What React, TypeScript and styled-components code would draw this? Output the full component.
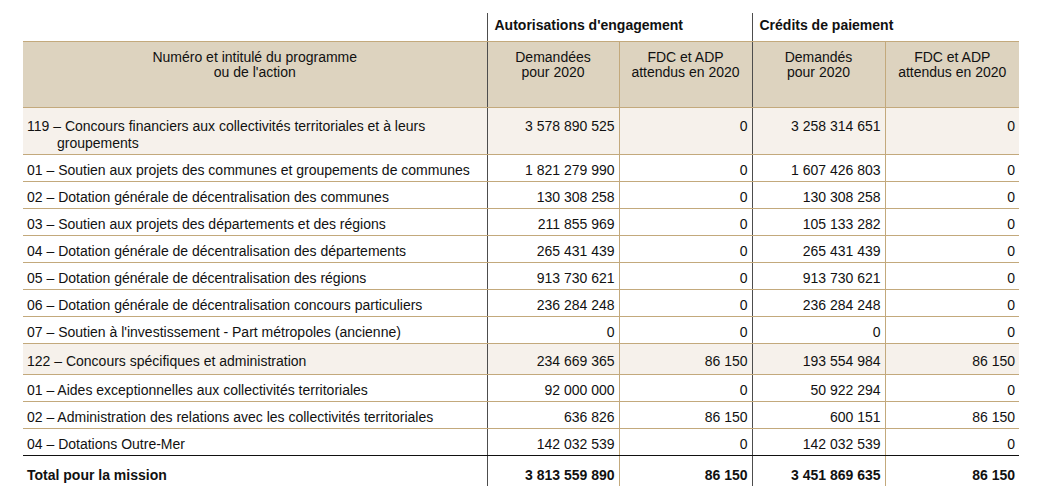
import React from "react";
import styled, { createGlobalStyle } from "styled-components";

const Global = createGlobalStyle`
  html, body { margin: 0; padding: 0; background: #ffffff; }
  body { font-family: "Liberation Sans", Arial, sans-serif; color: #111; }
`;

const TAN = "#c3a97c";
const DARK = "#4d4d4d";

const Page = styled.div`
  padding: 13px 0 0 23px;
`;

const Table = styled.table`
  border-collapse: collapse;
  table-layout: fixed;
  width: 996px;
  font-size: 14px;
  line-height: 17px;
`;

const GroupCell = styled.th`
  text-align: left;
  font-weight: bold;
  padding: 4px 0 0 7px;
  height: 24px;
  vertical-align: top;
  border-left: 1px solid ${DARK};
  border-bottom: 1px solid ${TAN};
`;

const EmptyCell = styled.th`
  border-bottom: 1px solid ${TAN};
`;

const HeadCell = styled.th<{ $sep?: "dark" | "tan" }>`
  background: #ddd3bf;
  font-weight: normal;
  text-align: center;
  vertical-align: top;
  padding: 8px 4px 0;
  height: 57px;
  line-height: 15px;
  border-bottom: 1px solid ${TAN};
  border-left: ${(p) =>
    p.$sep === "dark" ? `1px solid ${DARK}` : p.$sep === "tan" ? `1px solid ${TAN}` : "none"};
`;

const Row = styled.tr<{ $kind: "program" | "action" | "total"; $last?: boolean }>`
  background: ${(p) => (p.$kind === "program" ? "#f6f1eb" : "#ffffff")};
  & > td {
    border-bottom: 1px solid ${(p) => (p.$last ? "#111" : p.$kind === "total" ? "transparent" : TAN)};
    font-weight: ${(p) => (p.$kind === "total" ? "bold" : "normal")};
  }
`;

const LabelCell = styled.td<{ $pt: number; $h: number }>`
  text-align: left;
  vertical-align: top;
  padding: ${(p) => p.$pt}px 4px 0 34px;
  text-indent: -30px;
  height: ${(p) => p.$h - p.$pt - 1}px;
`;

const NumCell = styled.td<{ $pt: number; $sep: "dark" | "tan" }>`
  text-align: right;
  vertical-align: top;
  padding: ${(p) => p.$pt}px 4px 0 4px;
  border-left: 1px solid ${(p) => (p.$sep === "dark" ? DARK : TAN)};
`;

type R = {
  label: string;
  v: [string, string, string, string];
  kind: "program" | "action" | "total";
  h: number;
  pt: number;
  last?: boolean;
};

const rows: R[] = [
  {
    label: "119 – Concours financiers aux collectivités territoriales et à leurs groupements",
    v: ["3 578 890 525", "0", "3 258 314 651", "0"],
    kind: "program",
    h: 47,
    pt: 10,
  },
  { label: "01 – Soutien aux projets des communes et groupements de communes", v: ["1 821 279 990", "0", "1 607 426 803", "0"], kind: "action", h: 27, pt: 7 },
  { label: "02 – Dotation générale de décentralisation des communes", v: ["130 308 258", "0", "130 308 258", "0"], kind: "action", h: 27, pt: 7 },
  { label: "03 – Soutien aux projets des départements et des régions", v: ["211 855 969", "0", "105 133 282", "0"], kind: "action", h: 27, pt: 7 },
  { label: "04 – Dotation générale de décentralisation des départements", v: ["265 431 439", "0", "265 431 439", "0"], kind: "action", h: 27, pt: 7 },
  { label: "05 – Dotation générale de décentralisation des régions", v: ["913 730 621", "0", "913 730 621", "0"], kind: "action", h: 27, pt: 7 },
  { label: "06 – Dotation générale de décentralisation concours particuliers", v: ["236 284 248", "0", "236 284 248", "0"], kind: "action", h: 27, pt: 7 },
  { label: "07 – Soutien à l'investissement - Part métropoles (ancienne)", v: ["0", "0", "0", "0"], kind: "action", h: 27, pt: 7 },
  { label: "122 – Concours spécifiques et administration", v: ["234 669 365", "86 150", "193 554 984", "86 150"], kind: "program", h: 31, pt: 9 },
  { label: "01 – Aides exceptionnelles aux collectivités territoriales", v: ["92 000 000", "0", "50 922 294", "0"], kind: "action", h: 27, pt: 7 },
  { label: "02 – Administration des relations avec les collectivités territoriales", v: ["636 826", "86 150", "600 151", "86 150"], kind: "action", h: 27, pt: 7 },
  { label: "04 – Dotations Outre-Mer", v: ["142 032 539", "0", "142 032 539", "0"], kind: "action", h: 27, pt: 7, last: true },
  { label: "Total pour la mission", v: ["3 813 559 890", "86 150", "3 451 869 635", "86 150"], kind: "total", h: 31, pt: 11 },
];

const seps: ("dark" | "tan")[] = ["dark", "tan", "dark", "tan"];

export default function App() {
  return (
    <Page>
      <Global />
      <Table>
        <colgroup>
          <col style={{ width: 464 }} />
          <col style={{ width: 132 }} />
          <col style={{ width: 133 }} />
          <col style={{ width: 133 }} />
          <col style={{ width: 134 }} />
        </colgroup>
        <thead>
          <tr>
            <EmptyCell />
            <GroupCell colSpan={2}>Autorisations d'engagement</GroupCell>
            <GroupCell colSpan={2}>Crédits de paiement</GroupCell>
          </tr>
          <tr>
            <HeadCell>
              Numéro et intitulé du programme
              <br />
              ou de l'action
            </HeadCell>
            <HeadCell $sep="dark">
              Demandées
              <br />
              pour 2020
            </HeadCell>
            <HeadCell $sep="tan">
              FDC et ADP
              <br />
              attendus en 2020
            </HeadCell>
            <HeadCell $sep="dark">
              Demandés
              <br />
              pour 2020
            </HeadCell>
            <HeadCell $sep="tan">
              FDC et ADP
              <br />
              attendus en 2020
            </HeadCell>
          </tr>
        </thead>
        <tbody>
          {rows.map((r, i) => (
            <Row key={i} $kind={r.kind} $last={r.last}>
              <LabelCell $pt={r.pt} $h={r.h}>
                {r.label}
              </LabelCell>
              {r.v.map((v, j) => (
                <NumCell key={j} $pt={r.pt} $sep={seps[j]}>
                  {v}
                </NumCell>
              ))}
            </Row>
          ))}
        </tbody>
      </Table>
    </Page>
  );
}
